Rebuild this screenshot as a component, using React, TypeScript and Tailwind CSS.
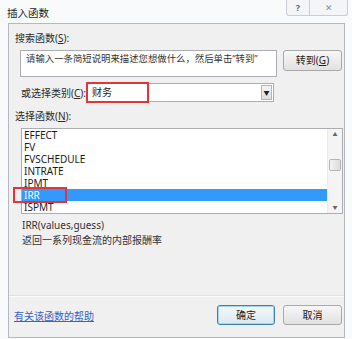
import React from 'react';

const FONT = { fontFamily: '"Noto Sans", "Noto Sans CJK SC", sans-serif' };

const ITEMS = ['EFFECT', 'FV', 'FVSCHEDULE', 'INTRATE', 'IPMT', 'IRR', 'ISPMT'];

const Btn = ({ children, primary }: { children: React.ReactNode; primary?: boolean }) => (
    <div
        className={`flex items-center justify-center rounded-[3px] border bg-gradient-to-b text-[10px] text-[#222] ${
            primary
                ? 'border-[#3c7fb1] from-[#f4f9fc] to-[#dbe8f1] shadow-[inset_0_0_0_1px_#a6d5f3]'
                : 'border-[#a9a9a9] from-[#f7f7f7] to-[#e1e1e1]'
        }`}
    >
        {children}
    </div>
);

export default function App() {
    return (
        <div className="w-[352px] h-[339px] bg-[#f8fafc] overflow-hidden" style={FONT}>
            {/* title bar */}
            <div className="h-[23px] flex justify-between items-start">
                <div className="pl-[7px] pt-[5px] text-[10.5px] leading-[16px] text-[#1e1e1e]">插入函数</div>
                <div className="mr-[4px] flex h-[16px] border-x border-b border-[#c9ced6] rounded-b-[3px] bg-[#f3f5f8]">
                    <div className="w-[23px] flex items-center justify-center text-[9px] text-[#5a6a80] font-bold border-r border-[#c9ced6]">?</div>
                    <div className="w-[37px] flex items-center justify-center text-[9px] text-[#8a9099]">✕</div>
                </div>
            </div>

            {/* body */}
            <div className="ml-[8px] w-[337px] h-[315px] border border-[#b4b8bf] bg-[#f0f0f0] flex flex-col">
                <div className="pl-[6px] pt-[7px] text-[10px] leading-[14px] text-[#2a2a2a]">
                    搜索函数(<span className="underline">S</span>):
                </div>
                <div className="mt-[5px] pl-[11px] flex gap-[6px]">
                    <div className="w-[257px] h-[27px] border border-[#abadb3] bg-white pl-[5px] pt-[1px] text-[9.4px] leading-[14px] text-[#333]">
                        请输入一条简短说明来描述您想做什么，然后单击“转到”
                    </div>
                    <div className="w-[59px] h-[21px] flex">
                        <div className="flex-1 flex">
                            <Btn>
                                <span className="w-[57px] h-[19px] flex items-center justify-center">
                                    转到(<span className="underline">G</span>)
                                </span>
                            </Btn>
                        </div>
                    </div>
                </div>

                <div className="mt-[6px] pl-[12px] flex items-center gap-[1px]">
                    <span className="w-[64px] text-[10px] leading-[14px] text-[#2a2a2a] whitespace-nowrap">
                        或选择类别(<span className="underline">C</span>):
                    </span>
                    <div className="relative w-[188px] h-[19px] border border-[#abadb3] bg-white flex items-center justify-between">
                        <span className="pl-[5px] text-[10px] text-[#222]">财务</span>
                        <div className="mr-[1px] w-[11px] h-[15px] border border-[#b5b5b5] bg-gradient-to-b from-[#f5f5f5] to-[#dedede] flex items-center justify-center">
                            <span className="text-[6px] leading-none text-[#222]">▼</span>
                        </div>
                        <div className="absolute -left-[1px] -top-[2px] w-[63px] h-[21px] border-2 border-[#e0353b]" />
                    </div>
                </div>

                <div className="mt-[7px] pl-[6px] text-[10px] leading-[14px] text-[#2a2a2a]">
                    选择函数(<span className="underline">N</span>):
                </div>

                <div className="relative mt-[5px] ml-[12px] w-[322px] h-[86px] border border-[#abadb3] bg-white flex">
                    <div className="flex-1 flex flex-col">
                        {ITEMS.map(item => (
                            <div
                                key={item}
                                className={`h-[12px] pl-[2px] text-[10px] leading-[12px] ${
                                    item === 'IRR' ? 'bg-[#3399ff] text-white' : 'text-[#1a1a1a]'
                                }`}
                            >
                                {item}
                            </div>
                        ))}
                    </div>
                    <div className="w-[15px] bg-[#f4f4f4] border-l border-[#ececec] flex flex-col items-center">
                        <span className="mt-[2px] text-[5px] text-[#666]">▲</span>
                        <div className="mt-[20px] w-[12px] h-[12px] border border-[#b4b4b4] rounded-[2px] bg-gradient-to-r from-[#f3f3f3] to-[#dcdcdc]" />
                        <span className="mt-auto mb-[2px] text-[5px] text-[#666]">▼</span>
                    </div>
                    <div className="absolute -left-[9px] top-[58px] w-[54px] h-[16px] border-2 border-[#e0353b]" />
                </div>

                <div className="mt-[4px] pl-[13px] text-[10px] leading-[14px] text-[#333]">IRR(values,guess)</div>
                <div className="mt-[1px] pl-[13px] text-[10px] leading-[14px] text-[#333]">返回一系列现金流的内部报酬率</div>

                <div className="mt-auto border-t border-[#e2e2e2] shadow-[inset_0_1px_0_#fbfbfb] h-[42px] flex items-center pl-[5px] pr-[2px]">
                    <span className="text-[10px] text-[#3166c4] underline">有关该函数的帮助</span>
                    <div className="ml-auto flex gap-[8px] mt-[-3px]">
                        <Btn primary>
                            <span className="w-[56px] h-[18px] flex items-center justify-center">确定</span>
                        </Btn>
                        <Btn>
                            <span className="w-[57px] h-[18px] flex items-center justify-center">取消</span>
                        </Btn>
                    </div>
                </div>
            </div>
        </div>
    );
}
